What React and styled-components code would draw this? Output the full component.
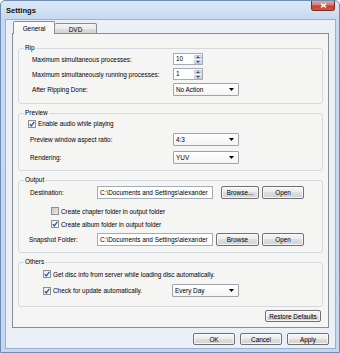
import React from 'react';
import styled, { createGlobalStyle } from 'styled-components';

const GlobalStyle = createGlobalStyle`
  html, body { margin: 0; padding: 0; background: #ffffff; }
  body { font-family: "Liberation Sans", Arial, sans-serif; }
  *, *::before, *::after { box-sizing: border-box; }
`;

const Window = styled.div`
  width: 340px;
  height: 353px;
  display: flex;
  flex-direction: column;
  border: 1px solid #6f8db4;
  border-radius: 5px 5px 0 0;
  background: linear-gradient(#dce8f6 0px, #c7d9ef 18px, #c4d7ee 100%);
  padding: 0 3px 3px 4px;
  font-family: "Liberation Sans", Arial, sans-serif;
  font-size: 6.4px;
  color: #000;
`;

const TitleBar = styled.div`
  height: 18px;
  display: flex;
  justify-content: space-between;
  align-items: flex-start;
  padding-left: 1px;
`;

const Title = styled.div`
  align-self: center;
  font-weight: bold;
  font-size: 7.6px;
  color: #111;
`;

const CloseButton = styled.div`
  width: 24px;
  height: 10px;
  margin-right: 1px;
  border: 1px solid #7b2b22;
  border-top: none;
  border-radius: 0 0 3px 3px;
  background: linear-gradient(#e9a99d 0%, #d97a6b 45%, #c2402f 55%, #cf5a45 100%);
  display: flex;
  align-items: center;
  justify-content: center;
`;

const Client = styled.div`
  flex: 1;
  display: flex;
  flex-direction: column;
  border: 1px solid #9ab2d1;
  background: #e9f0f8;
  padding: 1px 6px 3px 6px;
`;

const TabStrip = styled.div`
  display: flex;
  align-items: flex-end;
  height: 13px;
  margin-left: 1px;
  margin-bottom: -1px;
  position: relative;
  z-index: 1;
`;

const Tab = styled.div`
  width: 42px;
  height: ${p => (p.$active ? 13 : 11)}px;
  border: 1px solid #898c95;
  border-bottom: ${p => (p.$active ? 'none' : '1px solid #898c95')};
  border-left: ${p => (p.$active ? '1px solid #898c95' : 'none')};
  border-radius: 2px 2px 0 0;
  background: ${p =>
    p.$active
      ? 'linear-gradient(#fbfbfb, #f5f5f4)'
      : 'linear-gradient(#f4f4f4 0%, #ebebeb 50%, #dedede 51%, #d5d5d5 100%)'};
  display: flex;
  align-items: center;
  justify-content: center;
  padding-top: ${p => (p.$active ? 0 : 1)}px;
`;

const Panel = styled.div`
  flex: 1;
  display: flex;
  flex-direction: column;
  border: 1px solid #898c95;
  background: #f5f5f4;
  padding: 10px 5px 3px 5px;
`;

const Group = styled.fieldset`
  margin: 0;
  padding: 0 0 ${p => p.$pb}px 0;
  min-width: 0;
  border: 1px solid #d3d9df;
  border-radius: 3px;
  & + & { margin-top: 5px; }
`;

const Legend = styled.legend`
  margin-left: 5px;
  padding: 0 1px;
  height: 8px;
  line-height: 8px;
  font-size: 6.4px;
`;

const Row = styled.div`
  display: flex;
  align-items: center;
  height: ${p => p.$h}px;
  margin-top: ${p => p.$mt || 0}px;
  padding-left: ${p => p.$pl || 0}px;
  white-space: nowrap;
`;

const Label = styled.span`
  width: ${p => p.$w}px;
  flex-shrink: 0;
  white-space: nowrap;
  display: flex;
  align-items: center;
`;

const BoxMark = styled.span`
  width: 8px;
  height: 8px;
  flex-shrink: 0;
  margin-right: 2px;
  border: 1px solid #8e8f8f;
  background: ${p =>
    p.$checked
      ? 'linear-gradient(135deg, #e9eef5, #ffffff)'
      : 'linear-gradient(135deg, #c6c6c6, #ececec)'};
  display: flex;
  align-items: center;
  justify-content: center;
`;

const Check = ({ checked }) => (
  <BoxMark $checked={checked}>
    {checked && (
      <svg width="6" height="6" viewBox="0 0 6 6">
        <path d="M0.8 3.2 L2.3 4.9 L5.3 0.8" fill="none" stroke="#2c56aa" strokeWidth="1.3" />
      </svg>
    )}
  </BoxMark>
);

const SpinWrap = styled.div`
  display: flex;
  width: 30px;
  height: 12px;
  border: 1px solid #a5acb5;
  background: #fff;
`;

const SpinValue = styled.div`
  flex: 1;
  padding-left: 2px;
  line-height: 10px;
`;

const SpinButtons = styled.div`
  width: 8px;
  display: flex;
  flex-direction: column;
  gap: 1px;
  padding: 1px 0;
  background: #fff;
`;

const SpinHalf = styled.div`
  flex: 1;
  background: linear-gradient(#e8eef6, #d3dde9);
  border: 1px solid #b9c6d6;
  border-radius: 1px;
  display: flex;
  align-items: center;
  justify-content: center;
`;

const SpinBox = ({ value }) => (
  <SpinWrap>
    <SpinValue>{value}</SpinValue>
    <SpinButtons>
      <SpinHalf>
        <svg width="4" height="2" viewBox="0 0 4 2"><path d="M0 2L2 0L4 2Z" fill="#3b4a5c" /></svg>
      </SpinHalf>
      <SpinHalf>
        <svg width="4" height="2" viewBox="0 0 4 2"><path d="M0 0L4 0L2 2Z" fill="#3b4a5c" /></svg>
      </SpinHalf>
    </SpinButtons>
  </SpinWrap>
);

const ComboWrap = styled.div`
  width: ${p => p.$w}px;
  height: 13px;
  flex-shrink: 0;
  border: 1px solid #9ea4ab;
  border-radius: 1px;
  background: linear-gradient(#ffffff, #f4f4f4);
  display: flex;
  align-items: center;
  justify-content: space-between;
  padding: 0 4px 0 2px;
`;

const Combo = ({ value, w = 67 }) => (
  <ComboWrap $w={w}>
    <span>{value}</span>
    <svg width="5" height="3" viewBox="0 0 5 3"><path d="M0 0H5L2.5 3Z" fill="#000" /></svg>
  </ComboWrap>
);

const TextInput = styled.div`
  width: 116px;
  height: 13px;
  flex-shrink: 0;
  border: 1px solid #a5acb5;
  background: #fff;
  padding-left: 2px;
  line-height: 11px;
  overflow: hidden;
  white-space: nowrap;
`;

const Button = styled.div`
  width: ${p => p.$w}px;
  height: ${p => p.$h || 12}px;
  margin-left: ${p => p.$ml || 0}px;
  flex-shrink: 0;
  border: 1px solid #707070;
  border-radius: 2px;
  background: linear-gradient(#f4f4f4 0%, #ececec 49%, #dedede 50%, #d2d2d2 100%);
  box-shadow: inset 0 0 0 1px rgba(255, 255, 255, 0.75);
  display: flex;
  align-items: center;
  justify-content: center;
  white-space: nowrap;
`;

const RestoreRow = styled.div`
  display: flex;
  justify-content: flex-end;
  margin-top: 3px;
  padding-right: 2px;
`;

const ButtonBar = styled.div`
  display: flex;
  justify-content: flex-end;
  gap: 5px;
  margin-top: 5px;
`;

const PATH = 'C:\\Documents and Settings\\alexander';

export default function App() {
  return (
    <>
      <GlobalStyle />
      <Window>
        <TitleBar>
          <Title>Settings</Title>
          <CloseButton>
            <svg width="7" height="5" viewBox="0 0 7 5">
              <path d="M1 0.6 L6 4.4 M6 0.6 L1 4.4" stroke="#fff" strokeWidth="1.4" />
            </svg>
          </CloseButton>
        </TitleBar>
        <Client>
          <TabStrip>
            <Tab $active>General</Tab>
            <Tab>DVD</Tab>
          </TabStrip>
          <Panel>
            <Group $pb={7}>
              <Legend>Rip</Legend>
              <Row $h={12} $mt={1} $pl={13}>
                <Label $w={141}>Maximum simultaneous processes:</Label>
                <SpinBox value="10" />
              </Row>
              <Row $h={12} $mt={3} $pl={13}>
                <Label $w={141}>Maximum simultaneously running processes:</Label>
                <SpinBox value="1" />
              </Row>
              <Row $h={13} $mt={3} $pl={13}>
                <Label $w={141}>After Ripping Done:</Label>
                <Combo value="No Action" w={66} />
              </Row>
            </Group>

            <Group $pb={6}>
              <Legend>Preview</Legend>
              <Row $h={9} $mt={2} $pl={9}>
                <Check checked />
                <span>Enable audio while playing</span>
              </Row>
              <Row $h={13} $mt={5} $pl={11}>
                <Label $w={143}>Preview window aspect ratio:</Label>
                <Combo value="4:3" w={66} />
              </Row>
              <Row $h={13} $mt={5} $pl={11}>
                <Label $w={143}>Rendering:</Label>
                <Combo value="YUV" w={66} />
              </Row>
            </Group>

            <Group $pb={6}>
              <Legend>Output</Legend>
              <Row $h={13} $mt={2} $pl={11}>
                <Label $w={67}>Destination:</Label>
                <TextInput>{PATH}</TextInput>
                <Button $w={38} $h={13} $ml={8}>Browse...</Button>
                <Button $w={42} $h={13} $ml={3}>Open</Button>
              </Row>
              <Row $h={10} $mt={7} $pl={32}>
                <Check />
                <span>Create chapter folder in output folder</span>
              </Row>
              <Row $h={10} $mt={3} $pl={32}>
                <Check checked />
                <span>Create album folder in output folder</span>
              </Row>
              <Row $h={13} $mt={4} $pl={10}>
                <Label $w={68}>Snapshot Folder:</Label>
                <TextInput>{PATH}</TextInput>
                <Button $w={43} $h={13} $ml={3}>Browse</Button>
                <Button $w={42} $h={13} $ml={3}>Open</Button>
              </Row>
            </Group>

            <Group $pb={9}>
              <Legend>Others</Legend>
              <Row $h={10} $mt={3} $pl={24}>
                <Check checked />
                <span>Get disc info from server while loading disc automatically.</span>
              </Row>
              <Row $h={13} $mt={5} $pl={24}>
                <Label $w={129}>
                  <Check checked />
                  <span>Check for update automatically.</span>
                </Label>
                <Combo value="Every Day" w={67} />
              </Row>
            </Group>

            <RestoreRow>
              <Button $w={56}>Restore Defaults</Button>
            </RestoreRow>
          </Panel>
          <ButtonBar>
            <Button $w={42}>OK</Button>
            <Button $w={42}>Cancel</Button>
            <Button $w={42}>Apply</Button>
          </ButtonBar>
        </Client>
      </Window>
    </>
  );
}
